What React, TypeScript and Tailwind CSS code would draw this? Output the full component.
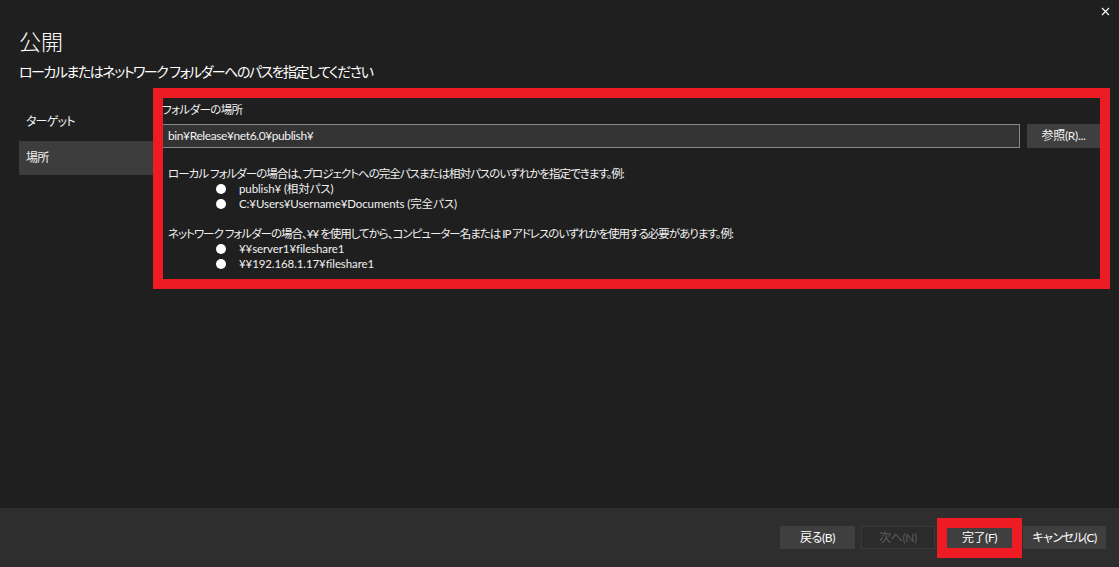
import React from 'react';
import { X } from 'lucide-react';

const font = { fontFamily: 'Lato, "Noto Sans CJK JP", sans-serif', fontFeatureSettings: '"palt"' };

const localExamples = ['publish¥ (相対パス)', 'C:¥Users¥Username¥Documents (完全パス)'];
const networkExamples = ['¥¥server1¥fileshare1', '¥¥192.168.1.17¥fileshare1'];

const Bullets: React.FC<{ items: string[] }> = ({ items }) => (
  <ul className="pl-[48px] tracking-[-0.1px]">
    {items.map((item) => (
      <li key={item} className="flex items-center h-[15px]">
        <span className="w-[10px] h-[10px] rounded-full bg-white mr-[13px]" />
        <span>{item}</span>
      </li>
    ))}
  </ul>
);

export default function App() {
  return (
    <div className="w-[1119px] h-[567px] bg-[#1f1f1f] text-[#f1f1f1] flex flex-col overflow-hidden" style={font}>
      {/* Main dialog area */}
      <div className="flex-1 flex flex-col pl-[19px] pt-[6px]">
        <div className="flex justify-end pr-[7px] h-[10px]">
          <X size={13} strokeWidth={2} className="-mt-[1px] text-white" />
        </div>
        <h1 className="mt-[12px] text-[22px] leading-[28px] font-light text-white">公開</h1>
        <p className="mt-[6px] text-[14px] leading-[20px] tracking-[-1.5px] text-white">
          ローカルまたはネットワーク フォルダーへのパスを指定してください
        </p>

        <div className="mt-[6px] flex">
          {/* Sidebar */}
          <nav className="w-[134px] pt-[17px] flex flex-col gap-[2px] text-[12px] tracking-[-0.8px]">
            <div className="h-[34px] flex items-center pl-[7px]">ターゲット</div>
            <div className="h-[34px] flex items-center pl-[7px] bg-[#3d3d3d]">場所</div>
          </nav>

          {/* Content, highlighted */}
          <section className="w-[957px] h-[201px] border-[10px] border-[#ed1c24] text-[11.5px] tracking-[-1px]">
            <div className="pt-[3px] leading-[18px] -ml-[1px] tracking-[-0.6px]">フォルダーの場所</div>
            <div className="mt-[5px] flex gap-[7px] text-[12px]">
              <div className="flex-1 h-[24px] bg-[#333333] border border-[#8a8a8a] border-l-0 flex items-center pl-[5px] tracking-[-0.4px]">
                bin¥Release¥net6.0¥publish¥
              </div>
              <button className="w-[73px] h-[24px] bg-[#3f3f3f] text-[12px] tracking-[-0.3px] text-[#f1f1f1] flex items-center justify-center">
                参照(R)...
              </button>
            </div>
            <div className="mt-[18px] pl-[5px] leading-[15px]">
              <p>ローカル フォルダーの場合は、プロジェクトへの完全パスまたは相対パスのいずれかを指定できます。例:</p>
              <Bullets items={localExamples} />
              <p className="mt-[15px]">
                ネットワーク フォルダーの場合、¥¥ を使用してから、コンピューター名または IP アドレスのいずれかを使用する必要があります。例:
              </p>
              <Bullets items={networkExamples} />
            </div>
          </section>
        </div>
      </div>

      {/* Footer */}
      <footer className="h-[59px] bg-[#2e2e2e] flex items-center justify-end pr-[13px] text-[12px] tracking-[-0.4px]">
        <button className="w-[75px] h-[23px] bg-[#3f3f3f] text-white">戻る(B)</button>
        <button className="ml-[6px] w-[74px] h-[23px] bg-[#2b2b2b] border border-[#3a3a3a] text-[#5c5c5c]">
          次へ(N)
        </button>
        <div className="ml-[2px] border-[10px] border-[#ed1c24]">
          <button className="w-[65px] h-[20px] bg-[#3f3f3f] text-white flex items-center justify-center">完了(F)</button>
        </div>
        <button className="ml-[1px] w-[83px] h-[23px] bg-[#3f3f3f] text-white tracking-[-0.6px]">キャンセル(C)</button>
      </footer>
    </div>
  );
}
